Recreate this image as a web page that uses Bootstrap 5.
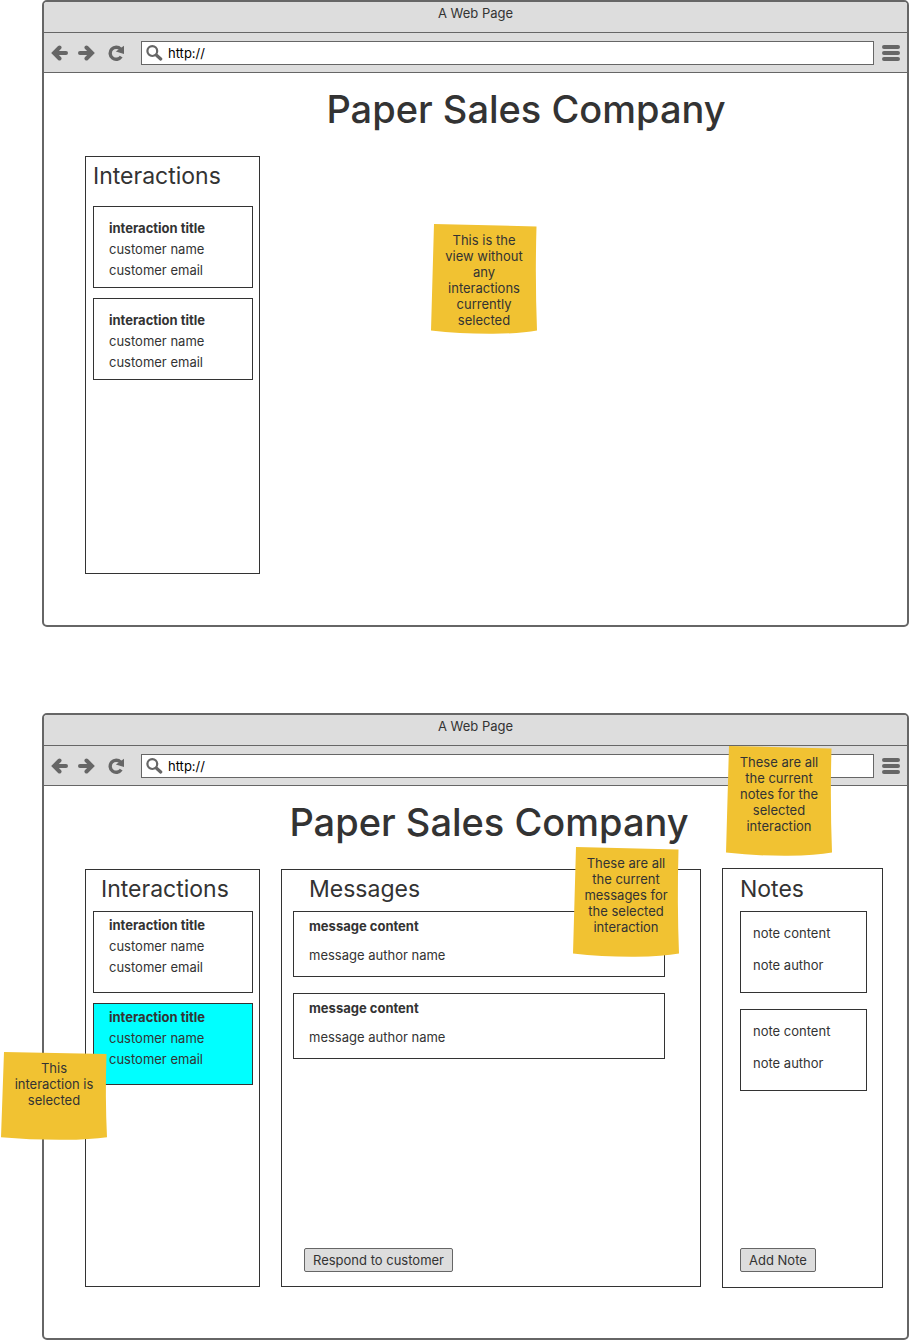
<!DOCTYPE html>
<html lang="en">
<head>
<meta charset="utf-8">
<meta name="viewport" content="width=device-width, initial-scale=1">
<title>Paper Sales Company</title>
<link href="https://cdn.jsdelivr.net/npm/bootstrap@5.3.0/dist/css/bootstrap.min.css" rel="stylesheet">
<style>
  :root { --ink: #333; --chrome: #666; --bar: #ddd; --note: #f1c232; }
  body { font-family: Inter, "Liberation Sans", sans-serif; font-size: 13px; line-height: 21px; color: var(--ink); background: #fff; padding-left: 42px; }
  .browser { border: 2px solid var(--chrome); border-radius: 5px; }
  .browser + .browser { margin-top: 86px; }
  .titlebar { background: var(--bar); height: 31px; padding-top: 1px; border-bottom: 1px solid var(--chrome); border-radius: 3px 3px 0 0; }
  .toolbar { background: var(--bar); height: 40px; border-bottom: 1px solid var(--chrome); padding: 0 7px; }
  .tool { border: 0; background: none; padding: 0; color: var(--chrome); line-height: 0; }
  .address { height: 24px; background: #fff; border: 1px solid var(--chrome); color: var(--chrome); padding-left: 4px; margin: 0 8px 0 16px; }
  .address input { border: 0; outline: 0; background: none; color: #000; padding: 1px 0 0 5px; min-width: 0; }
  .site-title { font-size: 38px; line-height: 48px; font-weight: 500; margin: 0; padding-top: 12px; }
  .title-wide { padding-left: 101px; }
  .title-near { padding-left: 27px; }
  .content { padding: 23px 24px 51px 41px; gap: 21px; }
  .panel { border: 1px solid var(--ink); min-height: 418px; }
  .panel h2 { font-size: 23px; line-height: 28px; font-weight: 400; margin: 0; }
  .entry { border: 1px solid var(--ink); padding: 3px 15px; min-height: 82px; }
  .entry p { margin: 0; }
  .picked { background: #0ff; }
  .interactions { width: 175px; padding: 5px 6px 5px 7px; }
  .interactions h2 { padding-left: 8px; margin-bottom: 8px; }
  .interactions .entry + .entry { margin-top: 10px; }
  .roomy h2 { padding-left: 0; margin-bottom: 16px; }
  .roomy .entry { padding-top: 11px; }
  .messages { padding: 5px 35px 14px 11px; }
  .messages h2 { padding-left: 16px; margin-bottom: 8px; }
  .messages .entry { min-height: 66px; padding-top: 4px; margin-bottom: 16px; }
  .messages .entry p + p { margin-top: 8px; }
  .messages .action { margin-left: 11px; }
  .notes { width: 161px; min-height: 420px; margin: -1px 0; padding: 6px 15px 15px 17px; }
  .notes h2 { margin-bottom: 8px; }
  .notes .entry { padding: 11px 12px; margin-bottom: 16px; }
  .notes .entry p + p { margin-top: 11px; }
  .action { background: var(--bar); border: 1px solid var(--chrome); border-radius: 2px; color: var(--ink); height: 24px; padding: 0 8px; line-height: 20px; }
  .sticky-memo { position: relative; width: 106px; height: 110px; padding: 8px; text-align: center; line-height: 16px; z-index: 2; }
  .sticky-memo svg { position: absolute; inset: 0; width: 100%; height: 100%; z-index: -1; fill: var(--note); }
  .memo-free { margin: 68px 0 0 150px; }
  .memo-over { position: absolute; }
  .memo-picked { left: -93px; top: 48px; height: 88px; }
  .memo-messages { right: 21px; top: -23px; }
  .memo-notes { left: 3px; top: -123px; }
</style>
</head>
<body>
<svg width="0" height="0" class="position-absolute" aria-hidden="true">
  <symbol id="left" viewBox="0 0 18 16"><path d="M8.500 2.500 3 8l5.500 5.500M3.500 8H15" fill="none" stroke="currentColor" stroke-width="4" stroke-linecap="round" stroke-linejoin="miter"/></symbol>
  <symbol id="reload" viewBox="0 0 18 16"><path d="M14.200 11.600A6 6 0 1 1 13.600 4.200" fill="none" stroke="currentColor" stroke-width="3.400"/><path d="M17 .800V9L8.800 6.600Z" fill="currentColor"/></symbol>
  <symbol id="search" viewBox="0 0 17 16"><circle cx="6.300" cy="6.100" r="4.900" fill="none" stroke="currentColor" stroke-width="2.200"/><path d="m10.500 10.200 4.200 3.800" stroke="currentColor" stroke-width="3.200" stroke-linecap="round"/></symbol>
  <symbol id="menu" viewBox="0 0 18 16"><path d="M2 2h14M2 8h14M2 14h14" stroke="currentColor" stroke-width="4" stroke-linecap="round"/></symbol>
  <symbol id="memo" viewBox="0 0 106 110" preserveAspectRatio="none"><path d="M3 0 105.500 2.500Q104 55 106 106.500 90 109.500 62 109.800 30 110 0 106.500Z"/></symbol>
</svg>

<section class="browser">
  <div class="titlebar text-center">A Web Page</div>
  <div class="toolbar d-flex align-items-center">
    <button class="tool" aria-label="Back"><svg width="18" height="16"><use href="#left"/></svg></button>
    <button class="tool ms-2" aria-label="Forward"><svg width="18" height="16"><use href="#left" transform="matrix(-1 0 0 1 18 0)"/></svg></button>
    <button class="tool ms-2 ps-1" aria-label="Reload"><svg width="18" height="16"><use href="#reload"/></svg></button>
    <label class="address d-flex align-items-center flex-grow-1"><svg width="17" height="16"><use href="#search"/></svg><input class="flex-grow-1" type="text" value="http://" aria-label="Address"></label>
    <button class="tool" aria-label="Menu"><svg width="18" height="16"><use href="#menu"/></svg></button>
  </div>
  <h1 class="site-title title-wide text-center">Paper Sales Company</h1>
  <div class="content d-flex align-items-start">
    <div class="panel interactions roomy">
      <h2>Interactions</h2>
      <div class="entry"><p class="fw-bold">interaction title</p><p>customer name</p><p>customer email</p></div>
      <div class="entry"><p class="fw-bold">interaction title</p><p>customer name</p><p>customer email</p></div>
    </div>
    <aside class="sticky-memo memo-free"><svg aria-hidden="true"><use href="#memo"/></svg>This is the view without any interactions currently selected</aside>
  </div>
</section>

<section class="browser">
  <div class="titlebar text-center">A Web Page</div>
  <div class="toolbar d-flex align-items-center">
    <button class="tool" aria-label="Back"><svg width="18" height="16"><use href="#left"/></svg></button>
    <button class="tool ms-2" aria-label="Forward"><svg width="18" height="16"><use href="#left" transform="matrix(-1 0 0 1 18 0)"/></svg></button>
    <button class="tool ms-2 ps-1" aria-label="Reload"><svg width="18" height="16"><use href="#reload"/></svg></button>
    <label class="address d-flex align-items-center flex-grow-1"><svg width="17" height="16"><use href="#search"/></svg><input class="flex-grow-1" type="text" value="http://" aria-label="Address"></label>
    <button class="tool" aria-label="Menu"><svg width="18" height="16"><use href="#menu"/></svg></button>
  </div>
  <h1 class="site-title title-near text-center">Paper Sales Company</h1>
  <div class="content d-flex">
    <div class="panel interactions">
      <h2>Interactions</h2>
      <div class="entry"><p class="fw-bold">interaction title</p><p>customer name</p><p>customer email</p></div>
      <div class="entry picked position-relative"><p class="fw-bold">interaction title</p><p>customer name</p><p>customer email</p>
        <aside class="sticky-memo memo-over memo-picked"><svg aria-hidden="true"><use href="#memo"/></svg>This interaction is selected</aside>
      </div>
    </div>
    <div class="panel messages flex-grow-1 d-flex flex-column position-relative">
      <h2>Messages</h2>
      <div class="entry"><p class="fw-bold">message content</p><p>message author name</p></div>
      <div class="entry"><p class="fw-bold">message content</p><p>message author name</p></div>
      <button class="action align-self-start mt-auto">Respond to customer</button>
      <aside class="sticky-memo memo-over memo-messages"><svg aria-hidden="true"><use href="#memo"/></svg>These are all the current messages for the selected interaction</aside>
    </div>
    <div class="panel notes d-flex flex-column position-relative">
      <h2>Notes</h2>
      <div class="entry"><p>note content</p><p>note author</p></div>
      <div class="entry"><p>note content</p><p>note author</p></div>
      <button class="action align-self-start mt-auto">Add Note</button>
      <aside class="sticky-memo memo-over memo-notes"><svg aria-hidden="true"><use href="#memo"/></svg>These are all the current notes for the selected interaction</aside>
    </div>
  </div>
</section>
<script src="https://cdn.jsdelivr.net/npm/bootstrap@5.3.0/dist/js/bootstrap.bundle.min.js"></script>
</body>
</html>
